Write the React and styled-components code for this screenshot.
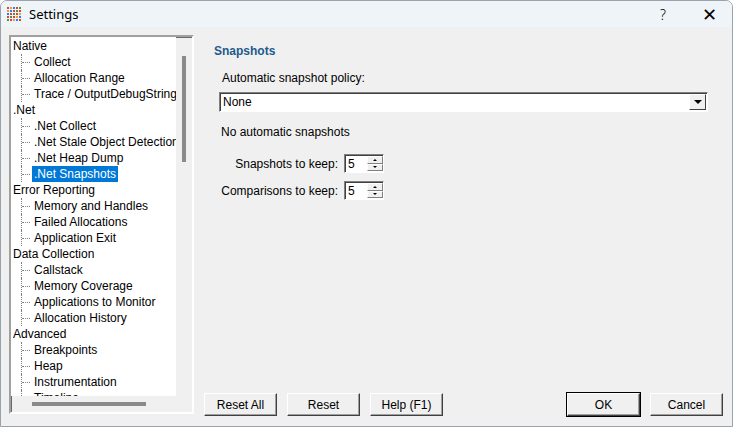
import React from "react";
import styled, { createGlobalStyle } from "styled-components";

const G = createGlobalStyle`
  html,body{margin:0;padding:0;background:#fff;}
  body{font-family:"Liberation Sans",Arial,sans-serif;font-size:12px;color:#000;}
`;
const Win = styled.div`
  width:731px;height:425px;border:1px solid #9aa3ad;border-radius:7px 7px 0 0;background:#f0f0f0;
  display:flex;flex-direction:column;overflow:hidden;
`;
const Title = styled.div`
  height:26px;background:#eff4f9;display:flex;align-items:center;padding-left:6px;font-size:13px;
  font-family:"Noto Sans","Liberation Sans",sans-serif;
`;
const TitleText = styled.span`margin-left:7px;flex:1;`;
const TBtn = styled.span`width:46px;text-align:center;font-size:${p=>p.s||14}px;font-weight:300;`;
const Body = styled.div`flex:1;display:flex;padding:8px 9px 12px 8px;gap:10px;min-height:0;`;
const Tree = styled.div`
  width:181px;border:2px solid;border-color:#a0a0a0 #fff #fff #a0a0a0;box-shadow:inset 1px 1px #696969;
  display:grid;grid-template-columns:1fr 16px;grid-template-rows:1fr 16px;background:#f0f0f0;min-height:0;
`;
const List = styled.div`background:#fff;overflow:hidden;padding-top:1px;min-height:0;`;
const Row = styled.div`height:16px;display:flex;align-items:center;white-space:nowrap;padding-left:${p=>p.child?10:0}px;`;
const Dots = styled.span`flex-shrink:0;width:8px;height:16px;margin-right:2px;position:relative;
  border-left:1px dotted #808080;
  &::after{content:"";position:absolute;left:0;top:8px;width:8px;border-top:1px dotted #808080;}`;
const Lbl = styled.span`padding:1px 2px;${p=>p.sel&&"background:#0078d7;color:#fff;"}`;
const VS = styled.div`position:relative;`;
const VThumb = styled.div`position:absolute;left:6px;top:19px;width:4px;height:106px;background:#8a8a8a;`;
const HS = styled.div`display:flex;align-items:center;padding-left:21px;`;
const HThumb = styled.div`width:114px;height:4px;background:#8a8a8a;`;
const Right = styled.div`flex:1;display:flex;flex-direction:column;`;
const Panel = styled.div`flex:1;padding:0 10px;`;
const H = styled.div`color:#1e5a8c;font-weight:bold;margin-top:9px;font-size:12px;`;
const Label = styled.div`margin:13px 0 0 8px;`;
const Combo = styled.div`margin:7px 5px 0 5px;height:18px;border:1px solid;border-color:#808080 #fff #fff #808080;
  box-shadow:inset 1px 1px #404040;background:#fff;display:flex;align-items:center;padding-left:3px;`;
const Arrow = styled.div`margin-left:auto;width:15px;height:14px;margin-right:1px;background:#f0f0f0;
  border:1px solid;border-color:#fff #404040 #404040 #fff;display:flex;align-items:center;justify-content:center;
  &::before{content:"";border:4px solid transparent;border-top:4px solid #000;border-bottom:0;}`;
const Note = styled.div`margin:13px 0 0 7px;`;
const SpinRow = styled.div`display:grid;grid-template-columns:124px auto;align-items:center;gap:6px;margin-top:${p=>p.mt}px;`;
const SLbl = styled.span`text-align:right;`;
const Spin = styled.div`width:35px;height:17px;border:1px solid;border-color:#808080 #fff #fff #808080;
  box-shadow:inset 1px 1px #404040;background:#fff;display:flex;align-items:center;padding-left:3px;`;
const Btns = styled.div`margin-left:auto;display:flex;flex-direction:column;width:16px;height:15px;`;
const Sb = styled.div`flex:1;background:#f0f0f0;border:1px solid;border-color:#fff #808080 #808080 #fff;
  display:flex;align-items:center;justify-content:center;
  &::before{content:"";border:2px solid transparent;${p=>p.up?"border-bottom:2px solid #000;border-top:0;":"border-top:2px solid #000;border-bottom:0;"}}`;
const Foot = styled.div`display:flex;gap:10px;margin-bottom:-2px;`;
const Btn = styled.button`width:73px;height:23px;font:12px "Liberation Sans",Arial,sans-serif;background:#f0f0f0;
  border:1px solid;border-color:#fff #404040 #404040 #fff;box-shadow:inset -1px -1px #a0a0a0;padding:0;
  ${p=>p.push&&"margin-left:auto;"}${p=>p.def&&"outline:1px solid #000;"}`;

const items=[["Native"],["Collect",1],["Allocation Range",1],["Trace / OutputDebugString",1],[".Net"],[".Net Collect",1],
[".Net Stale Object Detection",1],[".Net Heap Dump",1],[".Net Snapshots",1,1],["Error Reporting"],["Memory and Handles",1],
["Failed Allocations",1],["Application Exit",1],["Data Collection"],["Callstack",1],["Memory Coverage",1],
["Applications to Monitor",1],["Allocation History",1],["Advanced"],["Breakpoints",1],["Heap",1],["Instrumentation",1],["Timeline",1]];

const Logo=()=>(<svg width="15" height="15">{Array.from({length:25}).map((_,i)=>{const r=Math.floor(i/5),c=i%5;
const col=["#e0413a","#f29a2e","#3b7dd8","#e0413a","#4a9a3f"][(r+c)%5];return <rect key={i} x={c*3} y={r*3} width="2" height="2" fill={col}/>;})}</svg>);

export default function App(){return(<><G/><Win>
<Title><Logo/><TitleText>Settings</TitleText><TBtn>?</TBtn><TBtn s={18}>✕</TBtn></Title>
<Body>
<Tree><List>{items.map(([t,c,s])=>(<Row key={t} child={c}>{c&&<Dots/>}<Lbl sel={s}>{t}</Lbl></Row>))}</List>
<VS><VThumb/></VS><HS><HThumb/></HS><div/></Tree>
<Right><Panel>
<H>Snapshots</H>
<Label>Automatic snapshot policy:</Label>
<Combo>None<Arrow/></Combo>
<Note>No automatic snapshots</Note>
<SpinRow mt={15}><SLbl>Snapshots to keep:</SLbl><Spin>5<Btns><Sb up/><Sb/></Btns></Spin></SpinRow>
<SpinRow mt={8}><SLbl>Comparisons to keep:</SLbl><Spin>5<Btns><Sb up/><Sb/></Btns></Spin></SpinRow>
</Panel>
<Foot><Btn>Reset All</Btn><Btn>Reset</Btn><Btn>Help (F1)</Btn><Btn push def>OK</Btn><Btn>Cancel</Btn></Foot>
</Right></Body></Win></>);}
